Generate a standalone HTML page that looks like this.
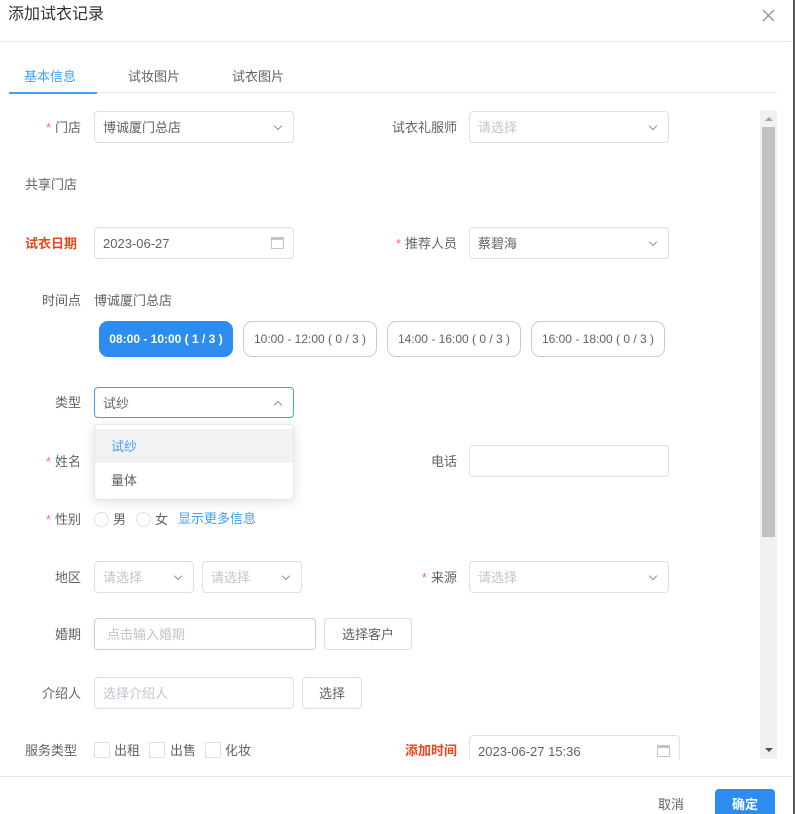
<!DOCTYPE html>
<html><head><meta charset="utf-8">
<style>
*{box-sizing:border-box;margin:0;padding:0}
html,body{width:795px;height:814px;overflow:hidden}
body{background:#fff;font-family:"Liberation Sans","Noto Sans CJK SC",sans-serif;font-size:13px;color:#606266;position:relative}
.a{position:absolute;white-space:nowrap}
.lbl{position:absolute;text-align:right;white-space:nowrap;line-height:20px;margin-top:1px}
.req:before{content:"*";color:#f56c6c;margin-right:4px}
.red{color:#f0441c;font-weight:bold}
.inp{position:absolute;border:1px solid #dcdfe6;border-radius:4px;height:32px;line-height:31px;padding-left:8px;background:#fff;color:#606266}
.ph{color:#c0c4cc}
.arr{position:absolute;right:12px;top:11px;border-right:1.3px solid #909399;border-bottom:1.3px solid #909399;transform:rotate(45deg);width:6px;height:6px}
.up{transform:rotate(-135deg);top:14px}
.cal{position:absolute;right:9px;top:9px;width:13px;height:12px;border:1px solid #c0c4cc;border-top-width:3px}
.btn{position:absolute;border:1px solid #dcdfe6;border-radius:4px;height:32px;line-height:31px;text-align:center;color:#606266;background:#fff}
.tb{position:absolute;top:321px;height:36px;width:134px;border:1px solid #ccc;border-radius:9px;text-align:center;line-height:34px;font-size:12px;color:#606266}
.rad{position:absolute;top:512px;width:15px;height:15px;border:1px solid #dcdfe6;border-radius:50%}
.chk{position:absolute;top:742px;width:16px;height:16px;border:1px solid #dcdfe6;border-radius:2px}
.t{line-height:20px;margin-top:1px}
</style></head><body>
<div class="a" style="left:8px;top:5px;font-size:16px;color:#303133;line-height:20px">添加试衣记录</div>
<svg class="a" style="left:762px;top:9px" width="13" height="13"><path d="M1 1L12 12M12 1L1 12" stroke="#909399" stroke-width="1.3"/></svg>
<div class="a" style="left:0;top:41px;width:792px;height:1px;background:#e4e7ed"></div>
<div class="a" style="left:793px;top:0;width:2px;height:814px;background:#555"></div>

<div class="a t" style="left:24px;top:66px;color:#409eff">基本信息</div>
<div class="a t" style="left:128px;top:66px">试妆图片</div>
<div class="a t" style="left:232px;top:66px">试衣图片</div>
<div class="a" style="left:9px;top:92px;width:768px;height:1px;background:#e4e7ed"></div>
<div class="a" style="left:9px;top:92px;width:88px;height:2px;background:#409eff"></div>

<div style="position:absolute;left:0;top:110px;width:795px;height:650px;overflow:hidden">
<div style="position:absolute;left:0;top:-110px;width:795px;height:760px;overflow:hidden">
<div class="lbl req" style="right:714px;top:117px">门店</div>
<div class="inp" style="left:94px;top:111px;width:200px">博诚厦门总店<i class="arr"></i></div>
<div class="lbl" style="right:338px;top:117px">试衣礼服师</div>
<div class="inp" style="left:469px;top:111px;width:200px"><span class="ph">请选择</span><i class="arr"></i></div>

<div class="lbl" style="left:25px;top:174px">共享门店</div>

<div class="lbl red" style="left:25px;top:233px">试衣日期</div>
<div class="inp" style="left:94px;top:227px;width:200px">2023-06-27<i class="cal"></i></div>
<div class="lbl req" style="right:338px;top:233px">推荐人员</div>
<div class="inp" style="left:469px;top:227px;width:200px">蔡碧海<i class="arr"></i></div>

<div class="lbl" style="right:714px;top:290px">时间点</div>
<div class="a t" style="left:94px;top:290px">博诚厦门总店</div>
<div class="tb" style="left:99px;background:#2d8cf0;border-color:#2d8cf0;color:#fff;font-weight:bold">08:00 - 10:00 ( 1 / 3 )</div>
<div class="tb" style="left:243px">10:00 - 12:00 ( 0 / 3 )</div>
<div class="tb" style="left:387px">14:00 - 16:00 ( 0 / 3 )</div>
<div class="tb" style="left:531px">16:00 - 18:00 ( 0 / 3 )</div>

<div class="lbl" style="right:714px;top:392px">类型</div>
<div class="inp" style="left:94px;top:387px;width:200px;height:31px;border-color:#409eff">试纱<i class="arr up"></i></div>

<div class="lbl req" style="right:714px;top:451px">姓名</div>
<div class="lbl" style="right:338px;top:451px">电话</div>
<div class="inp" style="left:469px;top:445px;width:200px"></div>

<div class="a" style="left:94px;top:424px;width:200px;height:76px;background:#fff;border:1px solid #e4e7ed;border-radius:4px;box-shadow:0 2px 12px rgba(0,0,0,.12)">
<div style="position:absolute;left:0;top:4px;width:198px;height:34px;background:#f2f2f2;color:#409eff;line-height:36px;padding-left:16px">试纱</div>
<div style="position:absolute;left:0;top:38px;width:198px;height:34px;line-height:36px;padding-left:16px">量体</div>
</div>

<div class="lbl req" style="right:714px;top:509px">性别</div>
<div class="rad" style="left:94px"></div><div class="a t" style="left:113px;top:509px">男</div>
<div class="rad" style="left:136px"></div><div class="a t" style="left:155px;top:509px">女</div>
<div class="a t" style="left:178px;top:508px;color:#409eff">显示更多信息</div>

<div class="lbl" style="right:714px;top:567px">地区</div>
<div class="inp" style="left:94px;top:561px;width:100px"><span class="ph">请选择</span><i class="arr"></i></div>
<div class="inp" style="left:202px;top:561px;width:100px"><span class="ph">请选择</span><i class="arr"></i></div>
<div class="lbl req" style="right:338px;top:567px">来源</div>
<div class="inp" style="left:469px;top:561px;width:200px"><span class="ph">请选择</span><i class="arr"></i></div>

<div class="lbl" style="right:714px;top:624px">婚期</div>
<div class="inp" style="left:94px;top:618px;width:222px;padding-left:12px;border-color:#ccc"><span class="ph">点击输入婚期</span></div>
<div class="btn" style="left:324px;top:618px;width:88px">选择客户</div>

<div class="lbl" style="right:714px;top:683px">介绍人</div>
<div class="inp" style="left:94px;top:677px;width:200px"><span class="ph">选择介绍人</span></div>
<div class="btn" style="left:302px;top:677px;width:60px">选择</div>

<div class="lbl" style="left:25px;top:740px">服务类型</div>
<div class="chk" style="left:94px"></div><div class="a t" style="left:114px;top:740px">出租</div>
<div class="chk" style="left:149px"></div><div class="a t" style="left:170px;top:740px">出售</div>
<div class="chk" style="left:205px"></div><div class="a t" style="left:225px;top:740px">化妆</div>
<div class="lbl red" style="right:338px;top:740px">添加时间</div>
<div class="inp" style="left:469px;top:735px;width:211px">2023-06-27 15:36<i class="cal"></i></div>
</div>
</div>

<div class="a" style="left:760px;top:110px;width:17px;height:649px;background:#f1f1f1"></div>
<div class="a" style="left:762px;top:127px;width:13px;height:410px;background:#c1c1c1"></div>
<div class="a" style="left:765px;top:117px;width:0;height:0;border-left:4px solid transparent;border-right:4px solid transparent;border-bottom:4px solid #a3a3a3"></div>
<div class="a" style="left:765px;top:748px;width:0;height:0;border-left:4px solid transparent;border-right:4px solid transparent;border-top:4px solid #505050"></div>

<div class="a" style="left:0;top:776px;width:792px;height:1px;background:#e4e7ed"></div>
<div class="a" style="left:658px;top:796px;line-height:18px">取消</div>
<div class="a" style="left:715px;top:789px;width:60px;height:25px;background:#2d8cf0;border-radius:4px 4px 0 0;color:#fff;text-align:center;line-height:32px;font-weight:bold;overflow:hidden">确定</div>
</body></html>
